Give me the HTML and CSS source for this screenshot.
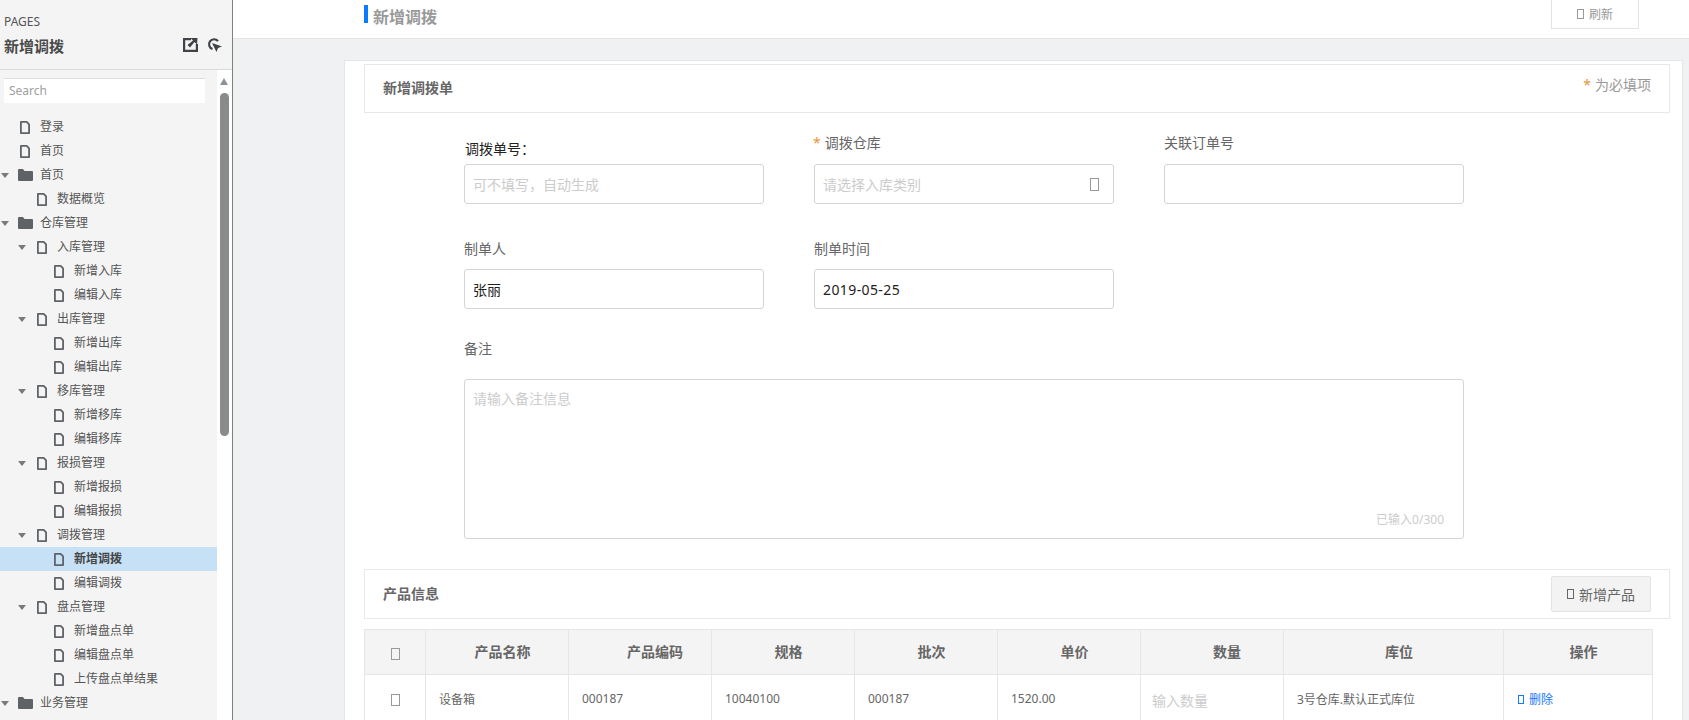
FILE: index.html
```html
<!DOCTYPE html>
<html>

	<head>
		<meta charset="UTF-8">
		<title>新增调拨</title>
		<link rel="stylesheet" href="styles.css">
	</head>

	<body>
		<svg class="defs" width="0" height="0">
			<symbol id="i-file" viewBox="0 0 10 13">
				<path d="M.9 .9h5.800L9.100 3.400V12.100H.9z" fill="none" stroke="#5f6368" stroke-width="1.800" stroke-linejoin="round"/>
			</symbol>
			<symbol id="i-folder" viewBox="0 0 15 12">
				<path d="M0 1a1 1 0 0 1 1-1h4l1.500 2H14a1 1 0 0 1 1 1v8a1 1 0 0 1-1 1H1a1 1 0 0 1-1-1z" fill="#5f6368"/>
			</symbol>
		</svg>

		<div class="sidebar">
			<div class="side-head">
				<div class="pages">PAGES</div>
				<div class="side-title">
					<span>新增调拨</span>
					<div class="side-tools">
						<svg width="15" height="14" viewBox="0 0 15 14">
							<path d="M8 1.100H1.100v11.800h12.800V6" fill="none" stroke="#3f4347" stroke-width="2.200"/>
							<path d="M14.500 0H7.500l2.500 2.500-5.500 4.500 2.500 2.500 4.500-5.500 2.500 2.500z" fill="#3f4347"/>
						</svg>
						<svg width="15" height="14" viewBox="0 0 15 14">
							<path d="M11 3.200A5 5 0 1 0 5.500 11" fill="none" stroke="#3f4347" stroke-width="2.200"/>
							<path d="M5 5l10 3.500-4 1.500-1.500 4z" fill="#3f4347"/>
						</svg>
					</div>
				</div>
			</div>
			<div class="side-body">
				<div class="side-main">
					<input class="search" type="text" placeholder="Search">
					<ul class="tree">
						<li class="lv0"><svg class="ico"><use href="#i-file"/></svg>登录</li>
						<li class="lv0"><svg class="ico"><use href="#i-file"/></svg>首页</li>
						<li class="lv0 open"><svg class="ico-folder"><use href="#i-folder"/></svg>首页</li>
						<li class="lv1"><svg class="ico"><use href="#i-file"/></svg>数据概览</li>
						<li class="lv0 open"><svg class="ico-folder"><use href="#i-folder"/></svg>仓库管理</li>
						<li class="lv1 open"><svg class="ico"><use href="#i-file"/></svg>入库管理</li>
						<li class="lv2"><svg class="ico"><use href="#i-file"/></svg>新增入库</li>
						<li class="lv2"><svg class="ico"><use href="#i-file"/></svg>编辑入库</li>
						<li class="lv1 open"><svg class="ico"><use href="#i-file"/></svg>出库管理</li>
						<li class="lv2"><svg class="ico"><use href="#i-file"/></svg>新增出库</li>
						<li class="lv2"><svg class="ico"><use href="#i-file"/></svg>编辑出库</li>
						<li class="lv1 open"><svg class="ico"><use href="#i-file"/></svg>移库管理</li>
						<li class="lv2"><svg class="ico"><use href="#i-file"/></svg>新增移库</li>
						<li class="lv2"><svg class="ico"><use href="#i-file"/></svg>编辑移库</li>
						<li class="lv1 open"><svg class="ico"><use href="#i-file"/></svg>报损管理</li>
						<li class="lv2"><svg class="ico"><use href="#i-file"/></svg>新增报损</li>
						<li class="lv2"><svg class="ico"><use href="#i-file"/></svg>编辑报损</li>
						<li class="lv1 open"><svg class="ico"><use href="#i-file"/></svg>调拨管理</li>
						<li class="lv2 active"><svg class="ico"><use href="#i-file"/></svg>新增调拨</li>
						<li class="lv2"><svg class="ico"><use href="#i-file"/></svg>编辑调拨</li>
						<li class="lv1 open"><svg class="ico"><use href="#i-file"/></svg>盘点管理</li>
						<li class="lv2"><svg class="ico"><use href="#i-file"/></svg>新增盘点单</li>
						<li class="lv2"><svg class="ico"><use href="#i-file"/></svg>编辑盘点单</li>
						<li class="lv2"><svg class="ico"><use href="#i-file"/></svg>上传盘点单结果</li>
						<li class="lv0 open"><svg class="ico-folder"><use href="#i-folder"/></svg>业务管理</li>
					</ul>
				</div>
				<div class="scroll">
					<div class="scroll-up"></div>
					<div class="scroll-thumb"></div>
				</div>
			</div>
		</div>

		<div class="main">
			<div class="topbar">
				<h1 class="page-title">新增调拨</h1>
				<button class="refresh"><i class="tofu"></i>刷新</button>
			</div>

			<div class="card">
				<div class="box box-form">
					<h2 class="box-title">新增调拨单</h2>
					<div class="must"><b>*</b>为必填项</div>
				</div>

				<div class="form">
					<div class="row row1">
						<div class="field">
							<label class="lab-first">调拨单号：</label>
							<input class="inp" type="text" placeholder="可不填写，自动生成">
						</div>
						<div class="field">
							<label class="lab-must"><b>*</b>调拨仓库</label>
							<div class="sel">
								<input class="inp" type="text" placeholder="请选择入库类别">
								<i class="tofu tofu-sel"></i>
							</div>
						</div>
						<div class="field">
							<label>关联订单号</label>
							<input class="inp" type="text">
						</div>
					</div>
					<div class="row row2">
						<div class="field">
							<label>制单人</label>
							<input class="inp" type="text" value="张丽">
						</div>
						<div class="field">
							<label>制单时间</label>
							<input class="inp inp-date" type="text" value="2019-05-25">
						</div>
					</div>
					<div class="row3">
						<label>备注</label>
						<div class="area-wrap">
							<textarea class="area" placeholder="请输入备注信息"></textarea>
							<span class="count">已输入0/300</span>
						</div>
					</div>
				</div>

				<div class="box box-prod">
					<h2 class="box-title">产品信息</h2>
					<button class="add"><i class="tofu"></i>新增产品</button>
				</div>

				<table class="tb">
					<colgroup>
						<col class="c-check">
						<col class="c-std">
						<col class="c-std">
						<col class="c-std">
						<col class="c-std">
						<col class="c-std">
						<col class="c-std">
						<col class="c-loc">
						<col class="c-op">
					</colgroup>
					<thead>
						<tr>
							<th class="cell-check"><i class="tofu tofu-check"></i></th>
							<th>产品名称</th>
							<th class="th-far">产品编码</th>
							<th>规格</th>
							<th>批次</th>
							<th>单价</th>
							<th class="th-far">数量</th>
							<th>库位</th>
							<th>操作</th>
						</tr>
					</thead>
					<tbody>
						<tr>
							<td class="cell-check"><i class="tofu tofu-check"></i></td>
							<td>设备箱</td>
							<td>000187</td>
							<td>10040100</td>
							<td>000187</td>
							<td>1520.00</td>
							<td class="td-qty"><input class="qty" type="text" placeholder="输入数量"></td>
							<td>3号仓库.默认正式库位</td>
							<td class="td-op"><a class="del"><i class="tofu"></i>删除</a></td>
						</tr>
					</tbody>
				</table>
			</div>
		</div>
	</body>

</html>
```

FILE: styles.css
```css
* {
	margin: 0;
	padding: 0;
	box-sizing: border-box;
	list-style: none;
}

html,
body {
	height: 720px;
	overflow: hidden;
}

body {
	display: flex;
	background: #f0f1f3;
	font-family: "Noto Sans", "Noto Sans CJK SC", sans-serif;
	font-size: 12px;
	color: #666;
}

input,
textarea,
button {
	font-family: "Noto Sans", "Noto Sans CJK SC", sans-serif;
}

input::placeholder,
textarea::placeholder {
	color: #ccc;
	opacity: 1;
}

.defs {
	position: absolute;
}

/* 左侧页面树 */
.sidebar {
	width: 233px;
	height: 720px;
	flex: none;
	background: #f4f4f4;
	border-right: 1px solid #808080;
}

.side-head {
	height: 70px;
	padding: 14px 10px 0 4px;
	border-bottom: 1px solid #d9d9d9;
}

.pages {
	line-height: 16px;
	color: #555;
}

.side-title {
	display: flex;
	justify-content: space-between;
	align-items: center;
	height: 24px;
	margin-top: 3px;
	font-size: 15px;
	font-weight: 700;
	color: #4a4a4a;
}

.side-tools {
	display: flex;
	align-items: center;
	gap: 9px;
}

.side-body {
	display: flex;
	height: 650px;
}

.side-main {
	width: 217px;
	flex: none;
	padding-top: 8px;
}

.search {
	display: block;
	width: 201px;
	height: 25px;
	margin-left: 4px;
	padding: 0 0 2px 5px;
	border: 0;
	border-top: 1px solid #ddd;
	background: #fff;
	font-size: 12px;
	outline: none;
}

.search::placeholder {
	color: #a0a0a0;
}

.tree {
	margin-top: 12px;
}

.tree li {
	display: flex;
	align-items: center;
	position: relative;
	height: 24px;
	line-height: 24px;
	color: #555;
}

.lv0 {
	padding-left: 20px;
}

.lv1 {
	padding-left: 37px;
}

.lv2 {
	padding-left: 54px;
}

.ico {
	width: 10px;
	height: 13px;
	margin-right: 10px;
	flex: none;
}

.ico-folder {
	width: 15px;
	height: 12px;
	margin: 0 7px 0 -2px;
	flex: none;
}

.open::before {
	content: "";
	position: absolute;
	top: 10px;
	border-left: 4.500px solid transparent;
	border-right: 4.500px solid transparent;
	border-top: 5px solid #7a7a7a;
}

.lv0.open::before {
	left: 1px;
}

.lv1.open::before {
	left: 18px;
}

.tree .active {
	background: #c6e0f5;
	font-weight: 700;
	color: #444;
}

.scroll {
	width: 15px;
	background: #fff;
	padding: 8px 3px 0;
}

.scroll-up {
	width: 0;
	border-left: 4.500px solid transparent;
	border-right: 4.500px solid transparent;
	border-bottom: 7px solid #8c9499;
}

.scroll-thumb {
	width: 9px;
	height: 343px;
	margin-top: 8px;
	border-radius: 5px;
	background: #8a8a8a;
}

/* 右侧主体 */
.main {
	flex: 1;
	min-width: 0;
}

.topbar {
	display: flex;
	justify-content: space-between;
	height: 39px;
	padding: 0 50px 0 131px;
	background: #fff;
	border-bottom: 1px solid #e3e4e6;
}

.page-title {
	height: 18px;
	margin-top: 5px;
	padding-left: 5px;
	border-left: 4px solid #0d7bff;
	font-size: 16px;
	line-height: 24px;
	font-weight: 700;
	color: #999;
}

.refresh {
	display: flex;
	align-items: center;
	justify-content: center;
	width: 88px;
	height: 29px;
	border: 1px solid #e3e3e3;
	border-top: 0;
	background: #fff;
	font-size: 12px;
	color: #999;
}

.tofu {
	display: inline-block;
	width: 7px;
	height: 10px;
	margin-right: 5px;
	border: 1px solid currentColor;
}

.card {
	height: 660px;
	margin: 21px 6px 0 111px;
	padding: 3px 12px 0 19px;
	background: #fff;
	border: 1px solid #e6e6e6;
	border-bottom: 0;
}

.box {
	display: flex;
	justify-content: space-between;
	border: 1px solid #e8e8e8;
}

.box-title {
	font-size: 14px;
	font-weight: 700;
	line-height: 20px;
	color: #666;
}

.box-form {
	height: 49px;
	padding: 13px 18px 0 18px;
}

.must {
	margin-top: -3px;
	font-size: 14px;
	line-height: 20px;
	color: #999;
}

.must b,
.field b {
	margin-right: 4px;
	font-weight: 400;
	color: #e8943a;
}

.form {
	padding-left: 100px;
}

.row {
	display: grid;
	grid-template-columns: repeat(3, 300px);
	column-gap: 50px;
	align-items: end;
}

.row1 {
	margin-top: 20px;
}

.row2 {
	margin-top: 35px;
}

.field label,
.row3 label {
	display: block;
	font-size: 14px;
	line-height: 20px;
	color: #666;
}

.field label {
	margin-bottom: 10px;
}

.row1 .field label {
	margin-bottom: 11px;
}

.row1 .field .lab-first {
	margin: 0 0 5px 1px;
	color: #222;
}

.lab-must {
	margin-left: -1px;
}

.inp {
	display: block;
	width: 300px;
	height: 40px;
	padding: 0 8px;
	border: 1px solid #d4d4d4;
	border-radius: 3px;
	background: #fff;
	font-size: 14px;
	color: #222;
	outline: none;
}

.inp-date {
	letter-spacing: .4px;
}

.sel,
.area-wrap {
	position: relative;
}

.area-wrap {
	width: 1000px;
}

.tofu-sel {
	position: absolute;
	right: 15px;
	top: 14px;
	width: 9px;
	height: 13px;
	margin: 0;
	color: #999;
}

.row3 {
	margin-top: 30px;
}

.row3 label {
	margin-bottom: 20px;
}

.area {
	display: block;
	width: 1000px;
	height: 160px;
	padding: 9px 8px;
	border: 1px solid #d4d4d4;
	border-radius: 3px;
	font-size: 14px;
	line-height: 20px;
	resize: none;
	outline: none;
}

.count {
	position: absolute;
	right: 20px;
	bottom: 10px;
	line-height: 18px;
	color: #ccc;
}

.box-prod {
	align-items: center;
	height: 50px;
	margin-top: 30px;
	padding: 0 18px;
}

.add {
	display: flex;
	align-items: center;
	justify-content: center;
	width: 100px;
	height: 36px;
	border: 1px solid #e3e3e3;
	border-radius: 2px;
	background: #f3f3f3;
	font-size: 14px;
	color: #666;
}

.tb {
	table-layout: fixed;
	width: 1288px;
	margin-top: 10px;
	border-collapse: collapse;
}

.c-check {
	width: 61px;
}

.c-std {
	width: 143px;
}

.c-loc {
	width: 220px;
}

.c-op {
	width: 149px;
}

.tb th,
.tb td {
	border: 1px solid #e6e6e6;
}

.tb th {
	height: 45px;
	padding: 0 0 2px 11px;
	background: #f4f4f4;
	font-size: 14px;
	color: #666;
	text-align: center;
}

.tb .th-far {
	padding-left: 30px;
}

.tb td {
	height: 48px;
	padding-left: 13px;
	font-size: 12px;
	color: #666;
}

.tb .cell-check {
	padding: 0;
	text-align: center;
}

.tofu-check {
	width: 9px;
	height: 12px;
	margin: 0;
	vertical-align: middle;
	color: #999;
}

.tb .td-qty {
	padding-left: 11px;
}

.tb .td-op {
	padding-left: 14px;
}

.qty {
	width: 110px;
	margin-top: 4px;
	border: 0;
	font-size: 14px;
	outline: none;
}

.del {
	color: #1677ff;
}

.del .tofu {
	width: 6px;
	height: 9px;
	margin-right: 5px;
}
```
